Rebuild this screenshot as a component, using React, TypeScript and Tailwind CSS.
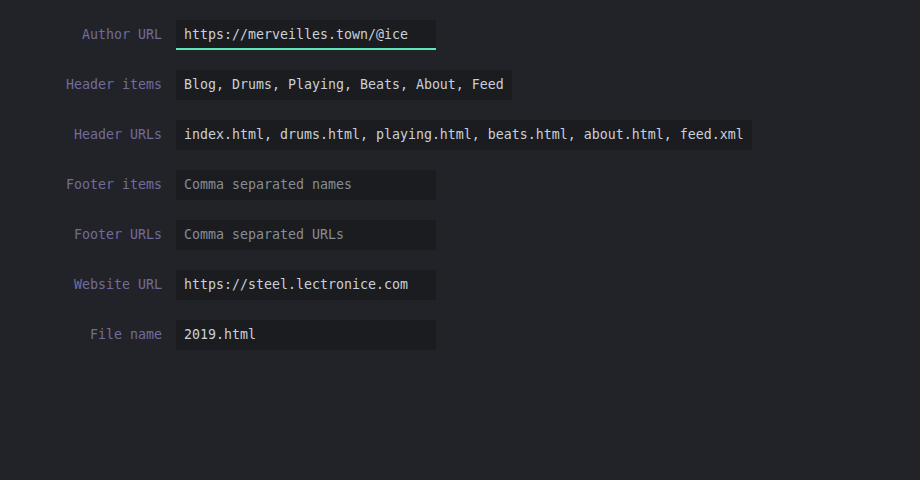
const FIELDS = [
  { label: 'Author URL', value: 'https://merveilles.town/@ice', focused: true },
  { label: 'Header items', value: 'Blog, Drums, Playing, Beats, About, Feed' },
  {
    label: 'Header URLs',
    value: 'index.html, drums.html, playing.html, beats.html, about.html, feed.xml',
  },
  { label: 'Footer items', placeholder: 'Comma separated names' },
  { label: 'Footer URLs', placeholder: 'Comma separated URLs' },
  { label: 'Website URL', value: 'https://steel.lectronice.com' },
  { label: 'File name', value: '2019.html' },
]

export default function App() {
  return (
    <div
      className="w-[920px] h-[480px] bg-[#222328] pt-5 flex flex-col gap-5 text-[13.29px]"
      style={{ fontFamily: '"DejaVu Sans Mono", monospace' }}
    >
      {FIELDS.map(field => (
        <div key={field.label} className="flex items-center gap-[14px]">
          <label className="w-[162px] text-right text-[#716c9c] shrink-0">{field.label}</label>
          <div
            className={`h-[30px] min-w-[260px] px-2 flex items-center bg-[#1b1c20] whitespace-pre ${
              field.focused ? 'border-b-2 border-[#5ae8b6] pt-[2px]' : ''
            }`}
          >
            {field.value ? (
              <span className="text-[#c8d0dc]">{field.value}</span>
            ) : (
              <span className="text-[#878c97]">{field.placeholder}</span>
            )}
          </div>
        </div>
      ))}
    </div>
  )
}
